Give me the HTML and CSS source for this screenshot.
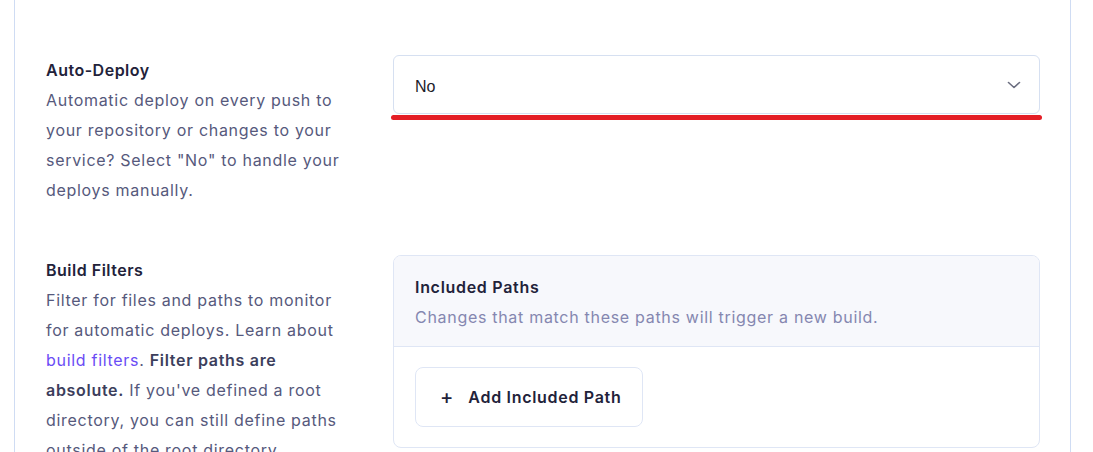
FILE: index.html
```html
<!DOCTYPE html>
<html>
<head>
<meta charset="utf-8">
<link rel="stylesheet" href="styles.css">
</head>
<body>
<div class="panel">
  <div class="row">
    <div class="info">
      <div class="label">Auto-Deploy</div>
      <p class="desc">Automatic deploy on every push to your repository or changes to your service? Select "No" to handle your deploys manually.</p>
    </div>
    <div class="field">
      <div class="select">
        <span class="select-value">No</span>
        <svg class="chevron" width="14" height="8" viewBox="0 0 14 8"><path d="M1.5 1.5 L7 6.5 L12.5 1.5" fill="none" stroke="#6b6e80" stroke-width="1.6" stroke-linecap="round" stroke-linejoin="round"/></svg>
      </div>
      <div class="highlight"></div>
    </div>
  </div>
  <div class="row">
    <div class="info">
      <div class="label">Build Filters</div>
      <p class="desc">Filter for files and paths to monitor for automatic deploys. Learn about <a class="link" href="#">build filters</a>. <strong class="strong">Filter paths are absolute.</strong> If you've defined a root directory, you can still define paths outside of the root directory.</p>
    </div>
    <div class="field">
      <div class="card">
        <div class="card-head">
          <div class="card-title">Included Paths</div>
          <div class="card-desc">Changes that match these paths will trigger a new build.</div>
        </div>
        <div class="card-body">
          <button class="add-btn"><span class="plus">+</span><span>Add Included Path</span></button>
        </div>
      </div>
    </div>
  </div>
</div>
</body>
</html>
```
FILE: styles.css
```css
html, body {
  margin: 0;
  padding: 0;
  background: #ffffff;
  overflow: hidden;
}
body {
  font-family: "Inter", "Liberation Sans", sans-serif;
  color: #22223a;
  letter-spacing: 0.7px;
}
.panel {
  margin-left: 14px;
  width: 1057px;
  height: 452px;
  border-left: 1px solid #cfdcf3;
  border-right: 1px solid #cfdcf3;
  padding: 55px 0 0 31px;
  box-sizing: border-box;
  display: flex;
  flex-direction: column;
  gap: 50px;
}
.row {
  display: flex;
  gap: 47px;
}
.info {
  width: 300px;
  flex: none;
}
.label {
  font-size: 16px;
  font-weight: 600;
  line-height: 30px;
  color: #22223a;
  letter-spacing: 0.5px;
}
.desc {
  margin: 0;
  font-size: 16px;
  line-height: 30px;
  color: #56597c;
}
.link {
  color: #6a4cf5;
  text-decoration: none;
}
.strong {
  font-weight: 600;
  color: #3c3e5c;
}
.field {
  width: 647px;
  flex: none;
}
.select {
  height: 59px;
  box-sizing: border-box;
  border: 1px solid #d6e0f1;
  border-radius: 6px;
  display: flex;
  align-items: center;
  justify-content: space-between;
  padding: 5px 18px 0 21px;
}
.select-value {
  font-family: "Liberation Sans", Arial, sans-serif;
  font-size: 16px;
  letter-spacing: 0;
  color: #1c1c2a;
}
.chevron {
  margin-top: -5px;
}
.highlight {
  margin: 1px -2px 0;
  height: 5px;
  border-radius: 3px;
  background: #e41e26;
}
.card {
  border: 1px solid #dfe6f5;
  border-radius: 8px;
  overflow: hidden;
}
.card-head {
  background: #f7f8fc;
  border-bottom: 1px solid #dfe6f5;
  padding: 19px 21px 17px;
}
.card-title {
  font-size: 16px;
  font-weight: 600;
  line-height: 24px;
  color: #22223a;
}
.card-desc {
  margin-top: 6px;
  font-size: 16px;
  line-height: 24px;
  color: #8587b0;
}
.card-body {
  padding: 20px 21px 20px;
}
.add-btn {
  height: 60px;
  width: 228px;
  box-sizing: border-box;
  border: 1px solid #dfe6f5;
  border-radius: 8px;
  background: #ffffff;
  font-family: "Inter", "Liberation Sans", sans-serif;
  font-size: 16px;
  font-weight: 600;
  letter-spacing: 0.7px;
  color: #22223a;
  display: flex;
  align-items: center;
  gap: 15px;
  padding: 0 0 0 24px;
}
.plus {
  font-size: 20px;
  font-weight: 500;
  line-height: 1;
  letter-spacing: 0;
}
```
